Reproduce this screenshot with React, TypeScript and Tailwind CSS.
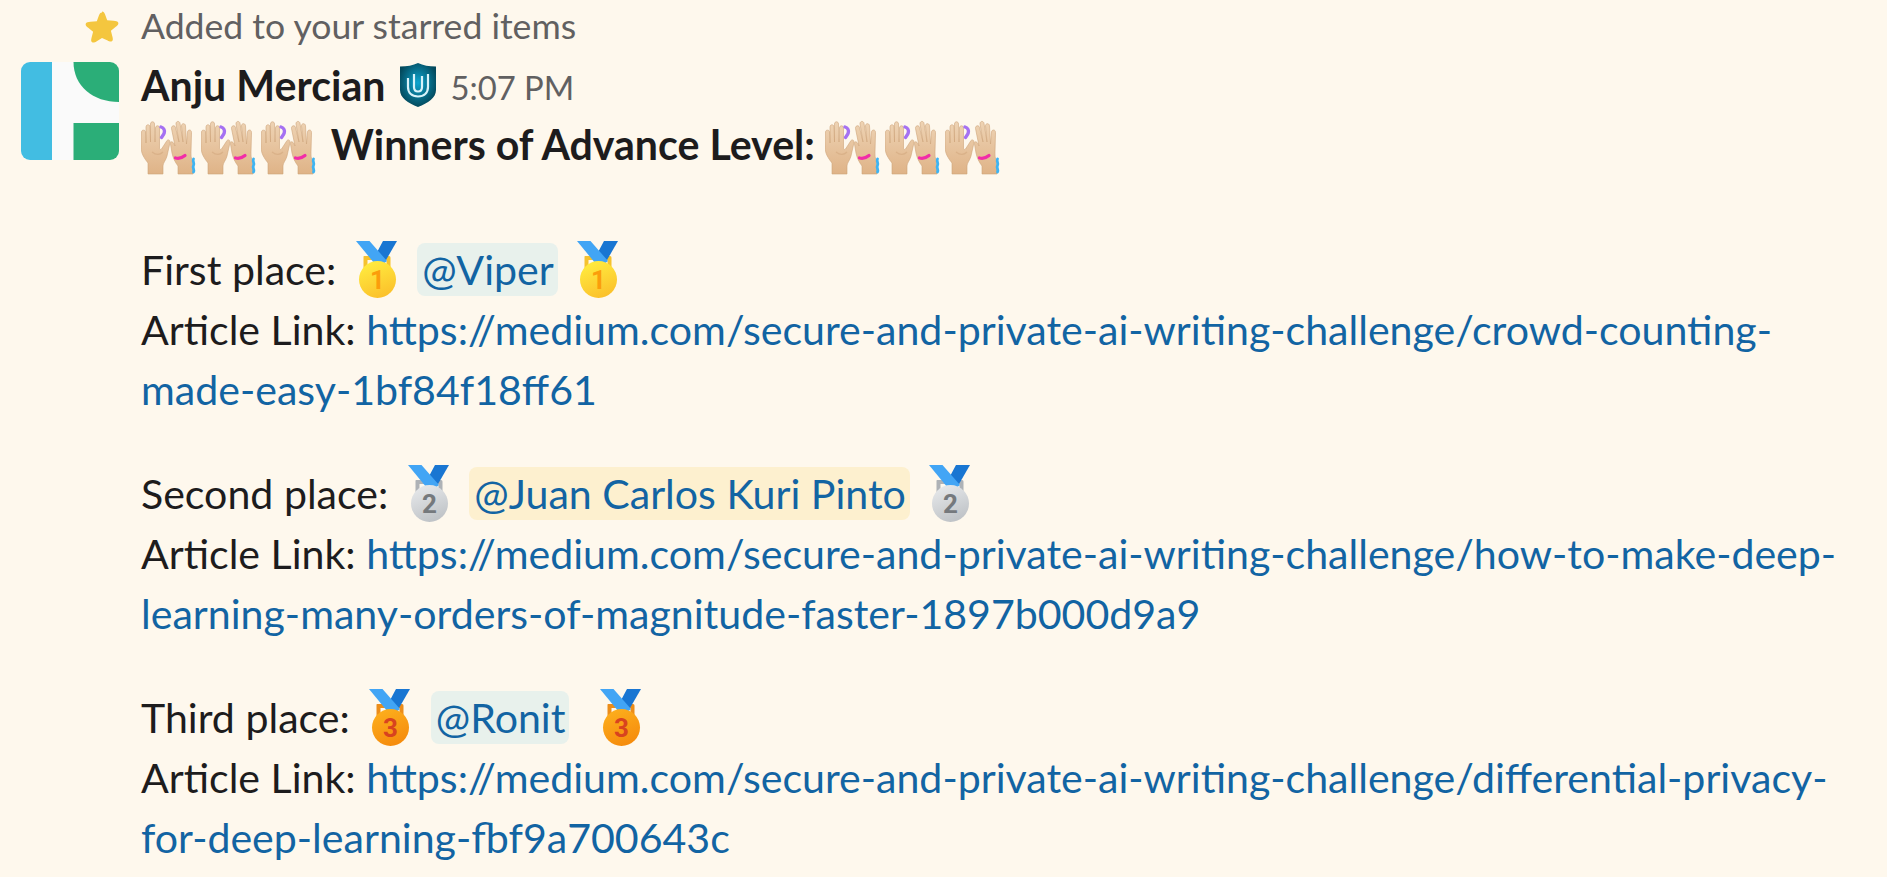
const linkClass = 'text-[#1264a3]'

function Star() {
  return (
    <svg viewBox="0 0 34 33" className="mt-[2px] h-[33px] w-[34px] shrink-0">
      <path
        d="M17 .5c1.600 0 2.400 1.300 3 2.800l2.200 6 6.400.4c2 .1 4.200.5 4.700 2 .5 1.600-1.100 2.900-2.500 4l-4.900 4 1.600 6.200c.4 1.700.7 3.400-.6 4.300-1.300.9-2.900.1-4.300-.8L17 26.900l-5.600 3.500c-1.400.9-3 1.700-4.300.8-1.300-.9-1-2.600-.6-4.300l1.600-6.200-4.900-4c-1.400-1.100-3-2.400-2.500-4 .5-1.500 2.700-1.900 4.700-2l6.400-.4 2.200-6c.6-1.500 1.400-2.800 3-2.800z"
        fill="#f4c63f"
      />
    </svg>
  )
}

function Avatar() {
  return (
    <svg viewBox="0 0 98 98" className="mt-[6px] h-[98px] w-[98px] shrink-0">
      <defs>
        <clipPath id="avatar-clip">
          <rect width="98" height="98" rx="9" />
        </clipPath>
      </defs>
      <g clipPath="url(#avatar-clip)">
        <rect width="98" height="98" fill="#fafafa" />
        <rect width="31" height="98" fill="#42bde2" />
        <path d="M52.500 0H98v40C72 40 52.500 24 52.500 0z" fill="#2bae78" />
        <rect x="52.500" y="61" width="45.500" height="37" fill="#2bae78" />
      </g>
    </svg>
  )
}

function Shield() {
  return (
    <svg viewBox="0 0 36 44" className="ml-[15px] mr-[14px] mb-[1px] h-[44px] w-[36px] shrink-0">
      <defs>
        <radialGradient id="shield-fill" cx="0.5" cy="0.45" r="0.55">
          <stop offset="0" stopColor="#0ea5cf" />
          <stop offset="1" stopColor="#03495c" />
        </radialGradient>
      </defs>
      <path d="M18 0c5 2.500 11 3.500 18 3.500V27c0 8-8 13-18 17C8 40 0 35 0 27V3.500C7 3.500 13 2.500 18 0z" fill="url(#shield-fill)" />
      <path d="M8 15v9c0 6 4 9.500 10 9.500S28 30 28 24V11" fill="none" stroke="#d8f3fa" strokeWidth="2.200" />
      <path d="M14 11v13c0 3 1.800 4.500 4 4.500s4-1.500 4-4.500V13" fill="none" stroke="#d8f3fa" strokeWidth="2.200" />
    </svg>
  )
}

function Hands() {
  return (
    <svg viewBox="0 0 60 60" className="inline-block h-[60px] w-[60px] align-[-15px]">
      <defs>
        <linearGradient id="hand-skin" x1="0" y1="0" x2="0" y2="1">
          <stop offset="0" stopColor="#eed3b4" />
          <stop offset="1" stopColor="#dfb387" />
        </linearGradient>
      </defs>
      <g transform="translate(-3 1)">
        {/* left hand */}
        <path
          d="M10 58V47C6 42 3 37 3 31l.5-15c0-2.500 4-2.500 4 0L8 27V11c0-3 4-3 4 0l.5 15V8c0-3 4-3 4 0l.5 18 .5-14c0-3 4-3 4 0l0 20c0 1.500 1 2 2 1l5.500-8.500c1.500-1.500 3.500 0 3 2L29 40c-1 4-4 7-4 10v8z"
          fill="url(#hand-skin)"
          stroke="#cfa47a"
          strokeWidth="0.6"
        />
        {/* right hand */}
        <path
          d="M40 58v-8c-3-4-5-8-6-13l-1.500-9c-.4-2.500 1.500-3 3-1L37 30l-3.500-17.500c-.5-3 3.500-4 4-1L41 26 38 8c-.4-3 3.600-3.600 4-.6L45 26l-1.500-16c-.2-3 3.800-3.200 4-.2l1 18.200 1-12c.4-3 4.200-2.500 4 .5L53 36c-.5 6 2 11 2 14v8z"
          fill="url(#hand-skin)"
          stroke="#cfa47a"
          strokeWidth="0.6"
        />
        <path d="M14 36c4 3 8 3 11 0" fill="none" stroke="#cfa47a" strokeOpacity="0.5" strokeWidth="1.200" />
        <path d="M23 11c3 1 4 3.500 3.200 6-.6 1.800-2 3-2.700 4.500" fill="none" stroke="#a571f2" strokeWidth="3.400" strokeLinecap="round" />
        <path d="M37.500 42c3 .8 6.500 0 9.500-2.500" fill="none" stroke="#f22ca8" strokeWidth="3.200" strokeLinecap="round" />
        <path d="M55.500 43c-1.500 2.500 1.500 4 0 6.500s1.500 4 0 6.500" fill="none" stroke="#3eb4f2" strokeWidth="2.800" strokeLinecap="round" />
      </g>
    </svg>
  )
}

function Medal({ num, light, color, strap, digit }: { num: string; light: string; color: string; strap: string; digit: string }) {
  const fill = `medal-${num}`
  return (
    <svg viewBox="0 0 60 60" className="inline-block h-[60px] w-[60px] align-[-15px]">
      <defs>
        <linearGradient id={fill} x1="0.3" y1="0" x2="0.7" y2="1">
          <stop offset="0" stopColor={light} />
          <stop offset="1" stopColor={color} />
        </linearGradient>
      </defs>
      <path d="M17 16h25c1 0 1.500.8 1.500 2v13h-4V20h-19v11h-4V18c0-1.200 0-2 .5-2z" fill={strap} />
      <path d="M28 16L36 1h14L39 20z" fill="#1976d2" />
      <path d="M9 1h13.500L40 21l-7 5.500H30z" fill="#42a5f5" />
      <circle cx="30.500" cy="39.500" r="18.500" fill={`url(#${fill})`} />
      <text x="30.500" y="49" textAnchor="middle" fontSize="26" fontWeight="700" fontFamily="Roboto, sans-serif" fill={digit}>
        {num}
      </text>
    </svg>
  )
}

const Gold = () => <Medal num="1" light="#ffec3f" color="#fbbf2a" strap="#f5c22f" digit="#fb9d0b" />
const Silver = () => <Medal num="2" light="#e6e8ea" color="#bdc1c5" strap="#aeb2b6" digit="#75797d" />
const Bronze = () => <Medal num="3" light="#fdae1c" color="#f58a0c" strap="#ec8d1a" digit="#d8431f" />

function Mention({ name, self }: { name: string; self?: boolean }) {
  return (
    <span className={`${self ? 'bg-[#fdf0cf]' : 'bg-[#e8f1ec]'} inline-block h-[53px] rounded-[8px] pl-[5px] pr-[4px] leading-[53px] text-[#1264a3]`}>
      @{name}
    </span>
  )
}

function Place({ label, mention, link, medal, wide }: { label: string; mention: React.ReactNode; link: string; medal: React.ReactNode; wide?: boolean }) {
  return (
    <div className="mb-[44px]">
      <div className="h-[60px] whitespace-pre">
        {label} {medal} {mention}{wide ? '  ' : ' '}{medal}
      </div>
      <div>
        Article Link: <a className={linkClass}>{link}</a>
      </div>
    </div>
  )
}

export default function App() {
  return (
    <div className="min-h-[877px] overflow-hidden bg-[#fef8ed] font-['Lato',sans-serif] text-[41.100px] leading-[60px] text-[#1d1c1d]">
      <div className="mb-[4px] flex h-[52px] items-center pl-[85px]">
        <Star />
        <span className="ml-[22px] text-[35.6px] leading-[50px] text-[#616061]">Added to your starred items</span>
      </div>
      <div className="flex pl-[21px] pr-[30px]">
        <Avatar />
        <div className="ml-[22px] min-w-0 flex-1">
          <div className="flex h-[58px] items-center">
            <span className="font-bold">Anju Mercian</span>
            <Shield />
            <span className="mt-[5px] text-[32.8px] text-[#616061]">5:07 PM</span>
          </div>
          <div className="mb-[65px] h-[60px] whitespace-nowrap font-bold">
            <Hands /><Hands /><Hands /> Winners of Advance Level: <Hands /><Hands /><Hands />
          </div>
          <Place
            label="First place:"
            medal={<Gold />}
            mention={<Mention name="Viper" />}
            link="https://medium.com/secure-and-private-ai-writing-challenge/crowd-counting-made-easy-1bf84f18ff61"
          />
          <Place
            label="Second place:"
            medal={<Silver />}
            mention={<Mention name="Juan Carlos Kuri Pinto" self />}
            link="https://medium.com/secure-and-private-ai-writing-challenge/how-to-make-deep-learning-many-orders-of-magnitude-faster-1897b000d9a9"
          />
          <Place
            label="Third place:"
            wide
            medal={<Bronze />}
            mention={<Mention name="Ronit" />}
            link="https://medium.com/secure-and-private-ai-writing-challenge/differential-privacy-for-deep-learning-fbf9a700643c"
          />
        </div>
      </div>
    </div>
  )
}
